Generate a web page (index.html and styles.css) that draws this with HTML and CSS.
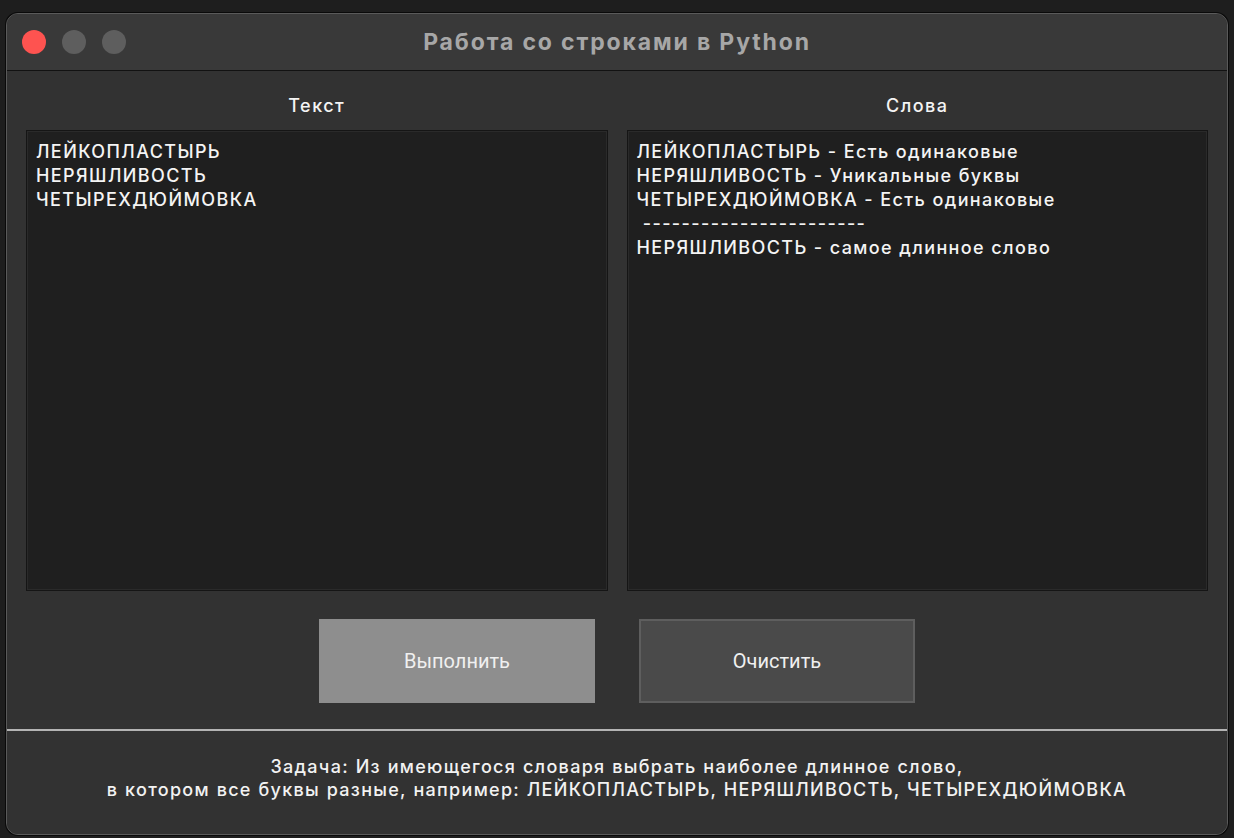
FILE: index.html
```html
<!DOCTYPE html>
<html lang="ru">
<head>
<meta charset="utf-8">
<title>Работа со строками в Python</title>
<link rel="stylesheet" href="styles.css">
</head>
<body>
<div class="window">
  <div class="titlebar">
    <div class="lights">
      <span class="light red"></span>
      <span class="light gray"></span>
      <span class="light gray"></span>
    </div>
    <div class="title">Работа со строками в Python</div>
  </div>
  <div class="content">
    <div class="panels">
      <div class="panel">
        <div class="label">Текст</div>
        <div class="box">ЛЕЙКОПЛАСТЫРЬ<br>НЕРЯШЛИВОСТЬ<br>ЧЕТЫРЕХДЮЙМОВКА</div>
      </div>
      <div class="panel">
        <div class="label">Слова</div>
        <div class="box">ЛЕЙКОПЛАСТЫРЬ - Есть одинаковые<br>НЕРЯШЛИВОСТЬ - Уникальные буквы<br>ЧЕТЫРЕХДЮЙМОВКА - Есть одинаковые<br>&nbsp;-----------------------<br>НЕРЯШЛИВОСТЬ - самое длинное слово</div>
      </div>
    </div>
    <div class="buttons">
      <button class="btn btn-run">Выполнить</button>
      <button class="btn btn-clear">Очистить</button>
    </div>
    <div class="separator"></div>
    <div class="footer">Задача: Из имеющегося словаря выбрать наиболее длинное слово,<br>в котором все буквы разные, например: ЛЕЙКОПЛАСТЫРЬ, НЕРЯШЛИВОСТЬ, ЧЕТЫРЕХДЮЙМОВКА</div>
  </div>
</div>
</body>
</html>
```

FILE: styles.css
```css
* { box-sizing: border-box; }

html, body {
  margin: 0;
  padding: 0;
  background: #1e1e1e;
  width: 1234px;
  height: 838px;
  overflow: hidden;
}

body {
  padding: 13px 0 0 6px;
  font-family: "Inter", "Open Sans", "Liberation Sans", sans-serif;
  color: #f2f2f2;
}

.window {
  width: 1222px;
  height: 822px;
  border: 1px solid #5a5a5a;
  border-radius: 12px;
  overflow: hidden;
  background: #323232;
  box-shadow: 0 0 0 1px #0a0a0a;
  display: flex;
  flex-direction: column;
}

.titlebar {
  height: 57px;
  flex: none;
  background: #393939;
  border-bottom: 1px solid #121212;
  display: flex;
  align-items: center;
  position: relative;
}

.lights {
  display: flex;
  gap: 16px;
  padding-left: 15px;
}

.light {
  width: 24px;
  height: 24px;
  border-radius: 50%;
  display: block;
}

.red { background: #fe5350; }
.gray { background: #5e5e5e; }

.title {
  position: absolute;
  left: 0;
  right: 0;
  top: 0;
  bottom: 0;
  display: flex;
  align-items: center;
  justify-content: center;
  font-size: 23px;
  font-weight: 700;
  color: #a7a7a7;
  letter-spacing: 1.85px;
}

.content {
  flex: 1;
  display: flex;
  flex-direction: column;
  background: #323232;
}

.panels {
  display: flex;
  gap: 19px;
  padding: 25px 19px 0 19px;
}

.panel {
  flex: 1;
  display: flex;
  flex-direction: column;
}

.label {
  height: 20px;
  line-height: 20px;
  text-align: center;
  font-size: 18px;
  font-weight: 500;
  color: #f4f4f4;
  letter-spacing: 1.5px;
  margin-bottom: 14px;
}

.box {
  height: 461px;
  background: #1f1f1f;
  border: 1px solid #151515;
  box-shadow: inset 0 0 0 1px #2a2a2a;
  padding: 9px 9px;
  font-size: 18px;
  line-height: 24px;
  font-weight: 500;
  letter-spacing: 1.4px;
  color: #f4f4f4;
  white-space: nowrap;
}

.buttons {
  display: flex;
  justify-content: center;
  gap: 44px;
  margin-top: 28px;
}

.btn {
  width: 276px;
  height: 84px;
  font-family: "Roboto", "Liberation Sans", sans-serif;
  font-size: 20px;
  color: #f0f0f0;
  border: none;
  padding: 0;
}

.btn-run {
  background: #8e8e8e;
}

.btn-clear {
  background: #4a4a4a;
  border: 2px solid #5e5e5e;
}

.separator {
  height: 2px;
  background: #b4b4b4;
  margin-top: 26px;
}

.footer {
  padding-top: 24px;
  text-align: center;
  font-size: 18px;
  line-height: 23px;
  font-weight: 500;
  letter-spacing: 1.3px;
  color: #f2f2f2;
}

.footer {
  word-spacing: 0.6px;
}
```
